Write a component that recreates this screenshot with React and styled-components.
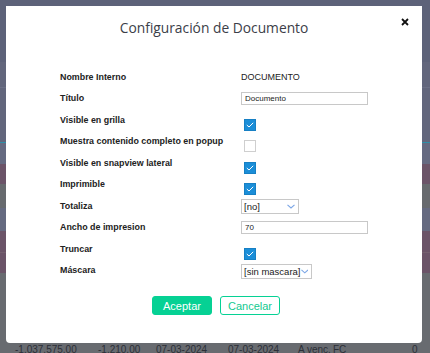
import React from 'react';
import styled, { createGlobalStyle } from 'styled-components';

const GlobalStyle = createGlobalStyle`
  html, body {
    margin: 0;
    padding: 0;
    width: 430px;
    height: 353px;
    overflow: hidden;
  }
  body {
    font-family: "Liberation Sans", Arial, sans-serif;
  }
`;

// page behind the dialog, already dimmed by the backdrop
const Page = styled.div`
  width: 430px;
  height: 353px;
  overflow: hidden;
  position: relative;
  display: flex;
  flex-direction: column;
`;

const Band = styled.div`
  height: ${(p) => p.h}px;
  flex: ${(p) => (p.fill ? 1 : 'none')};
  background: ${(p) => p.c};
  border-bottom: ${(p) => (p.line ? `1px solid ${p.line}` : 'none')};
`;

const BottomRow = styled.div`
  display: flex;
  align-items: flex-start;
  padding-top: 344px;
  padding-left: 15px;
  font-size: 10px;
  color: #2c2f37;
  white-space: nowrap;
  position: absolute;
  left: 0;
  top: 0;
`;

const Cell = styled.span`
  flex: none;
  width: ${(p) => p.w}px;
`;

const Backdrop = styled.div`
  position: absolute;
  inset: 0;
`;

const Modal = styled.div`
  position: absolute;
  left: 6px;
  top: 6px;
  width: 416px;
  height: 337px;
  background: #fff;
  border-radius: 0 0 4px 4px;
  display: flex;
  flex-direction: column;
`;

const Header = styled.div`
  height: 42px;
  display: grid;
  grid-template-columns: 1fr auto 1fr;
  align-items: center;
`;

const Title = styled.h2`
  margin: 0;
  font-family: "Open Sans", sans-serif;
  font-weight: 400;
  font-size: 13.8px;
  color: #3b3e48;
`;

const Close = styled.button`
  justify-self: end;
  align-self: start;
  margin: 12px 13px 0 0;
  padding: 0;
  border: none;
  background: none;
  width: 8px;
  height: 8px;
  display: flex;
  cursor: pointer;
`;

const Form = styled.div`
  margin: 18px 0 0 54px;
  display: grid;
  grid-template-columns: 181px auto;
  grid-auto-rows: 21.5px;
  align-items: center;
`;

const Label = styled.div`
  font-weight: 700;
  font-size: 8.9px;
  color: #222;
`;

const Value = styled.div`
  display: flex;
  align-items: center;
  font-size: 9px;
  color: #222;
`;

const TextInput = styled.div`
  box-sizing: border-box;
  width: ${(p) => p.w || 127}px;
  height: 13px;
  border: 1px solid #c8c8c8;
  padding-left: 3px;
  font-size: 8px;
  line-height: 11px;
  color: #222;
`;

const Select = styled.div`
  box-sizing: border-box;
  width: ${(p) => p.w}px;
  height: 15px;
  margin-top: 2px;
  border: 1px solid #c8c8c8;
  padding: 0 3px 0 2px;
  display: flex;
  align-items: center;
  justify-content: space-between;
  font-size: 9.5px;
  white-space: nowrap;
  color: #222;
`;

const Box = styled.span`
  box-sizing: border-box;
  width: 12px;
  height: 12px;
  margin: 10px 0 0 3px;
  display: flex;
  align-items: center;
  justify-content: center;
  background: ${(p) => (p.checked ? '#1b8ed8' : '#fff')};
  border: 1px solid ${(p) => (p.checked ? '#1780c4' : '#cfcfcf')};
`;

const Footer = styled.div`
  margin-top: 15px;
  display: flex;
  justify-content: center;
  gap: 8px;
  padding-left: 4px;
`;

const Button = styled.button`
  box-sizing: border-box;
  width: ${(p) => p.w}px;
  height: 19px;
  border-radius: 3px;
  border: 1px solid #06d194;
  background: ${(p) => (p.primary ? '#06d194' : '#fff')};
  color: ${(p) => (p.primary ? '#fff' : '#12c98f')};
  font-family: "Liberation Sans", Arial, sans-serif;
  font-size: 11px;
  padding: 0;
  cursor: pointer;
`;

function Check({ checked }) {
  return (
    <Box checked={checked}>
      {checked && (
        <svg width="8" height="6" viewBox="0 0 8 6">
          <path d="M0.8 3 L3 5 L7.2 0.8" fill="none" stroke="#fff" strokeWidth="1" />
        </svg>
      )}
    </Box>
  );
}

function Chevron() {
  return (
    <svg width="8" height="5" viewBox="0 0 8 5">
      <path d="M0.5 0.8 L4 4 L7.5 0.8" fill="none" stroke="#7ba6e6" strokeWidth="1.1" />
    </svg>
  );
}

const rows = [
  ['Nombre Interno', <Value>DOCUMENTO</Value>],
  ['Título', <TextInput>Documento</TextInput>],
  ['Visible en grilla', <Check checked />],
  ['Muestra contenido completo en popup', <Check />],
  ['Visible en snapview lateral', <Check checked />],
  ['Imprimible', <Check checked />],
  ['Totaliza', <Select w={58}>[no]<Chevron /></Select>],
  ['Ancho de impresion', <TextInput>70</TextInput>],
  ['Truncar', <Check checked />],
  ['Máscara', <Select w={71}>[sin mascara]<Chevron /></Select>],
];

const bands = [
  { h: 62, c: '#5d6279' },
  { h: 25, c: '#62667c', line: '#6c7086' },
  { h: 54, c: '#62667c', line: '#2d8fa8' },
  { h: 21, c: '#656a81' },
  { h: 20, c: '#6b5468' },
  { h: 24, c: '#676a6e' },
  { h: 23, c: '#656a80' },
  { h: 21, c: '#6b5468', line: '#75606f' },
  { h: 20, c: '#6b5468' },
];

export default function App() {
  return (
    <Page>
      <GlobalStyle />
      {bands.map((b, i) => (
        <Band key={i} h={b.h} c={b.c} line={b.line} />
      ))}
      <Band fill c="#686b70" />
      <BottomRow>
        <Cell w={83}>-1.037.575,00</Cell>
        <Cell w={58}>-1.210,00</Cell>
        <Cell w={72}>07-03-2024</Cell>
        <Cell w={70}>07-03-2024</Cell>
        <Cell w={35}>A venc.</Cell>
        <Cell w={79}>FC</Cell>
        <Cell w={10}>0</Cell>
      </BottomRow>
      <Backdrop>
        <Modal>
          <Header>
            <span />
            <Title>Configuración de Documento</Title>
            <Close aria-label="Cerrar">
              <svg width="8" height="8" viewBox="0 0 8 8">
                <path d="M1 1 L7 7 M7 1 L1 7" stroke="#111" strokeWidth="1.8" />
              </svg>
            </Close>
          </Header>
          <Form>
            {rows.map(([label, control]) => (
              <React.Fragment key={label}>
                <Label>{label}</Label>
                <Value>{control}</Value>
              </React.Fragment>
            ))}
          </Form>
          <Footer>
            <Button primary w={60}>Aceptar</Button>
            <Button w={60}>Cancelar</Button>
          </Footer>
        </Modal>
      </Backdrop>
    </Page>
  );
}
